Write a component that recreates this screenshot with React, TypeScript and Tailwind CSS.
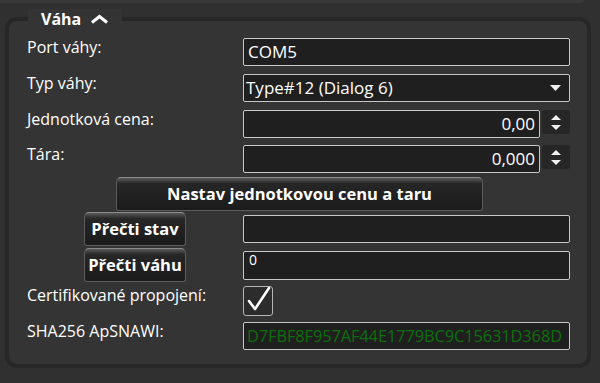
import { ReactNode } from 'react';

const FONT = { fontFamily: '"Open Sans", "Noto Sans", sans-serif' };

function Label({ children }: { children: ReactNode }) {
  return (
    <div className="w-[216px] shrink-0 self-start -mt-[2px] text-[16px] leading-[22px] text-white">
      {children}
    </div>
  );
}

function TextBox({
  value,
  align = 'left',
  className = '',
}: {
  value?: string;
  align?: 'left' | 'right';
  className?: string;
}) {
  return (
    <div
      className={`h-[28px] flex items-center overflow-hidden whitespace-nowrap rounded-[2px] border border-[#c8c8c8] bg-[#1f1f1f] px-[4px] text-[17px] text-white ${
        align === 'right' ? 'justify-end' : ''
      } ${className}`}
    >
      {value}
    </div>
  );
}

function Spinner() {
  return (
    <div className="ml-[2px] flex h-[24px] w-[28px] flex-col items-center justify-center gap-[5px] rounded-[3px] bg-[#262626]">
      <svg width="10" height="5" viewBox="0 0 10 5">
        <path d="M0 5 L5 0 L10 5 Z" fill="#f0f0f0" />
      </svg>
      <svg width="10" height="5" viewBox="0 0 10 5">
        <path d="M0 0 L10 0 L5 5 Z" fill="#f0f0f0" />
      </svg>
    </div>
  );
}

function DarkButton({ children, className = '' }: { children: ReactNode; className?: string }) {
  return (
    <div
      className={`flex items-center justify-center rounded-t-[5px] rounded-b-[3px] border border-[#5c5c5c] border-t-[#8a8a8a] bg-gradient-to-b from-[#5a5a5a] from-[0%] via-[#262626] via-[18%] to-[#1b1b1b] text-[16.5px] font-bold text-white ${className}`}
    >
      {children}
    </div>
  );
}

export default function App() {
  return (
    <div className="h-[383px] w-[600px] overflow-hidden bg-[#303030]" style={FONT}>
      <div className="h-[3px] w-[584px] rounded-br-[6px] bg-[#3a3a3a]" />
      <div className="pl-[5px] pt-[14px]">
        <div className="relative h-[351px] w-[586px] rounded-[12px] border-4 border-[#272727] bg-[#343434] pl-[18px] pr-[17px] pt-[17px]">
          {/* legend */}
          <div className="absolute -top-[12px] left-[19px] flex h-[20px] items-center gap-[9px] bg-[#343434] pl-[13px] pr-[13px]">
            <span className="text-[16px] font-bold leading-[20px] text-white">Váha</span>
            <svg width="19" height="10" viewBox="0 0 19 10">
              <path d="M2 8.5 L9.5 2.5 L17 8.5" fill="none" stroke="#ffffff" strokeWidth="3" />
            </svg>
          </div>

          {/* Port */}
          <div className="flex h-[28px] items-center">
            <Label>Port váhy:</Label>
            <TextBox value="COM5" className="flex-1" />
          </div>

          {/* Typ */}
          <div className="mt-[8px] flex h-[28px] items-center">
            <Label>Typ váhy:</Label>
            <div className="flex h-[28px] flex-1 items-center justify-between rounded-[2px] border border-[#c8c8c8] bg-[#1f1f1f] pl-[2px] pr-[8px] text-[17px] text-white">
              <span>Type#12 (Dialog 6)</span>
              <svg width="11" height="6" viewBox="0 0 11 6">
                <path d="M0 0 L11 0 L5.5 6 Z" fill="#f0f0f0" />
              </svg>
            </div>
          </div>

          {/* Jednotková cena */}
          <div className="mt-[8px] flex h-[28px] items-center">
            <Label>Jednotková cena:</Label>
            <TextBox value="0,00" align="right" className="flex-1" />
            <div className="self-start">
              <Spinner />
            </div>
          </div>

          {/* Tára */}
          <div className="mt-[7px] flex h-[28px] items-center">
            <Label>Tára:</Label>
            <TextBox value="0,000" align="right" className="flex-1" />
            <div className="self-start">
              <Spinner />
            </div>
          </div>

          {/* Nastav */}
          <div className="mt-[4px] flex">
            <DarkButton className="ml-[89px] h-[34px] w-[367px]">Nastav jednotkovou cenu a taru</DarkButton>
          </div>

          {/* Přečti stav */}
          <div className="mt-[1px] flex h-[34px] items-center">
            <div className="w-[216px] shrink-0">
              <DarkButton className="ml-[57px] h-[34px] w-[102px]">Přečti stav</DarkButton>
            </div>
            <TextBox className="flex-1" />
          </div>

          {/* Přečti váhu */}
          <div className="mt-[2px] flex h-[34px] items-center">
            <div className="w-[216px] shrink-0">
              <DarkButton className="ml-[57px] h-[34px] w-[102px]">Přečti váhu</DarkButton>
            </div>
            <div className="h-[29px] flex-1 rounded-[2px] border border-[#c8c8c8] bg-[#1f1f1f] px-[5px] pt-[1px] text-[14px] leading-[14px] text-white">
              0
            </div>
          </div>

          {/* Certifikované */}
          <div className="mt-[4px] flex h-[30px] items-center">
            <Label>Certifikované propojení:</Label>
            <div className="relative h-[30px] w-[30px] rounded-[3px] border-[1.5px] border-[#b4b4b4] bg-[#2c2c2c]">
              <svg className="absolute -top-[3px] left-[1px]" width="28" height="30" viewBox="0 0 28 30">
                <path
                  d="M4 17 L10 25 L24 4"
                  fill="none"
                  stroke="#ffffff"
                  strokeWidth="2.6"
                  strokeLinecap="round"
                  strokeLinejoin="round"
                />
              </svg>
            </div>
          </div>

          {/* SHA */}
          <div className="mt-[6px] flex h-[28px] items-center">
            <Label>SHA256 ApSNAWI:</Label>
            <div className="flex h-[28px] min-w-0 flex-1 items-center overflow-hidden whitespace-nowrap rounded-[2px] border border-[#c8c8c8] bg-[#1f1f1f] pl-[3px] text-[16.4px] tracking-[-0.1px] text-[#0c700c]">
              D7FBF8F957AF44E1779BC9C15631D368D
            </div>
          </div>
        </div>
      </div>
    </div>
  );
}
